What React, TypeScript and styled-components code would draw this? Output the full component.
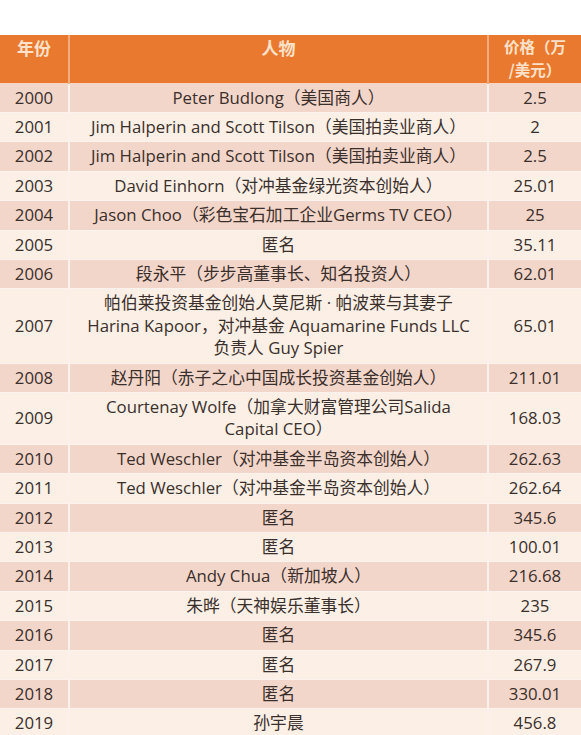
import React from 'react';
import styled, { createGlobalStyle } from 'styled-components';

const GlobalStyle = createGlobalStyle`
  html, body {
    margin: 0;
    padding: 0;
    background: #ffffff;
  }
  body {
    font-family: "Open Sans", "Noto Sans CJK SC", sans-serif;
  }
`;

const Page = styled.div`
  width: 581px;
  padding-top: 35px;
  overflow: hidden;
`;

const Table = styled.table`
  width: 100%;
  border-collapse: collapse;
  table-layout: fixed;
`;

const HeadCell = styled.th<{ $w: number }>`
  width: ${p => p.$w}px;
  background: #e9792f;
  color: #fde2cb;
  font-family: "Noto Sans CJK SC", sans-serif;
  font-weight: 700;
  font-size: 17px;
  line-height: 19.5px;
  height: 48px;
  padding: 3px 2px 0;
  box-sizing: border-box;
  vertical-align: top;
  text-align: center;
  border-left: 2px solid #f2ab7c;
  border-bottom: 1px solid #f6d6c4;
  &:first-child {
    border-left: none;
  }
`;

// the two-line price heading sits tight in the reference
const PriceHead = styled(HeadCell)`
  font-size: 15.5px;
  line-height: 22.5px;
  padding-top: 0;
`;

const Row = styled.tr<{ $alt: boolean }>`
  background: ${p => (p.$alt ? '#fbefe6' : '#f3d6ca')};
`;

const Cell = styled.td`
  color: #3a2f2b;
  font-size: 16.8px;
  line-height: 22.4px;
  padding: 3px 2px;
  text-align: center;
  vertical-align: middle;
  white-space: nowrap;
  border-left: 2px solid #fcf1ea;
  border-bottom: 1px solid #fcf3ee;
  &:first-child {
    border-left: none;
  }
`;

type Entry = { year: string; who: React.ReactNode; price: string };

const rows: Entry[] = [
  { year: '2000', who: 'Peter Budlong（美国商人）', price: '2.5' },
  { year: '2001', who: 'Jim Halperin and Scott Tilson（美国拍卖业商人）', price: '2' },
  { year: '2002', who: 'Jim Halperin and Scott Tilson（美国拍卖业商人）', price: '2.5' },
  { year: '2003', who: 'David Einhorn（对冲基金绿光资本创始人）', price: '25.01' },
  { year: '2004', who: 'Jason Choo（彩色宝石加工企业Germs TV CEO）', price: '25' },
  { year: '2005', who: '匿名', price: '35.11' },
  { year: '2006', who: '段永平（步步高董事长、知名投资人）', price: '62.01' },
  {
    year: '2007',
    who: (
      <>
        帕伯莱投资基金创始人莫尼斯 · 帕波莱与其妻子
        <br />
        Harina Kapoor，对冲基金 Aquamarine Funds LLC
        <br />
        负责人 Guy Spier
      </>
    ),
    price: '65.01',
  },
  { year: '2008', who: '赵丹阳（赤子之心中国成长投资基金创始人）', price: '211.01' },
  {
    year: '2009',
    who: (
      <>
        Courtenay Wolfe（加拿大财富管理公司Salida
        <br />
        Capital CEO）
      </>
    ),
    price: '168.03',
  },
  { year: '2010', who: 'Ted Weschler（对冲基金半岛资本创始人）', price: '262.63' },
  { year: '2011', who: 'Ted Weschler（对冲基金半岛资本创始人）', price: '262.64' },
  { year: '2012', who: '匿名', price: '345.6' },
  { year: '2013', who: '匿名', price: '100.01' },
  { year: '2014', who: 'Andy Chua（新加坡人）', price: '216.68' },
  { year: '2015', who: '朱晔（天神娱乐董事长）', price: '235' },
  { year: '2016', who: '匿名', price: '345.6' },
  { year: '2017', who: '匿名', price: '267.9' },
  { year: '2018', who: '匿名', price: '330.01' },
  { year: '2019', who: '孙宇晨', price: '456.8' },
];

export default function App() {
  return (
    <Page>
      <GlobalStyle />
      <Table>
        <thead>
          <tr>
            <HeadCell $w={69}>年份</HeadCell>
            <HeadCell $w={419}>人物</HeadCell>
            <PriceHead $w={93}>
              价格（万
              <br />
              /美元）
            </PriceHead>
          </tr>
        </thead>
        <tbody>
          {rows.map((r, i) => (
            <Row key={r.year} $alt={i % 2 === 1}>
              <Cell>{r.year}</Cell>
              <Cell>{r.who}</Cell>
              <Cell>{r.price}</Cell>
            </Row>
          ))}
        </tbody>
      </Table>
    </Page>
  );
}
